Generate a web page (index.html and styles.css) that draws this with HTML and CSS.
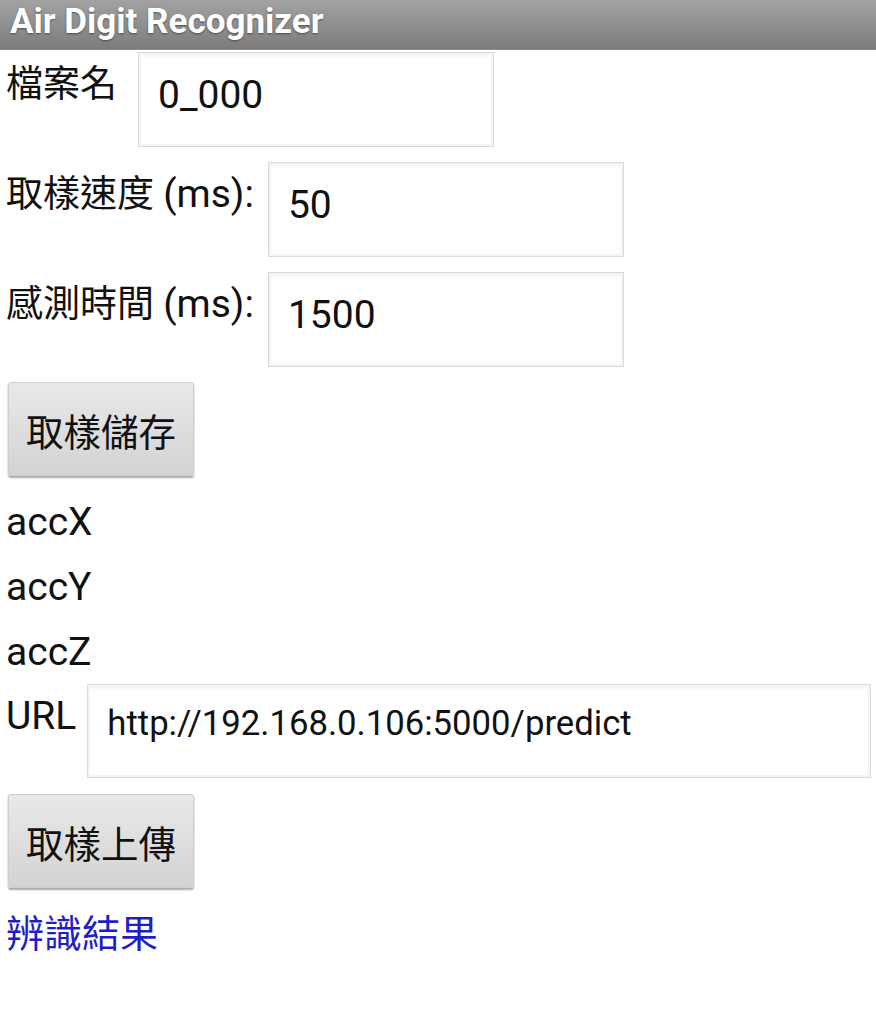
FILE: index.html
```html
<!DOCTYPE html>
<html lang="zh-Hant">
<head>
<meta charset="utf-8">
<title>Air Digit Recognizer</title>
<link rel="stylesheet" href="styles.css">
</head>
<body>
<header class="titlebar">Air Digit Recognizer</header>
<main class="screen">
  <div class="row row-first">
    <span class="label label-file">檔案名</span>
    <div class="field field-short">0_000</div>
  </div>
  <div class="row">
    <span class="label label-ms">取樣速度 <span class="latin">(ms):</span></span>
    <div class="field field-short">50</div>
  </div>
  <div class="row">
    <span class="label label-ms">感測時間 <span class="latin">(ms):</span></span>
    <div class="field field-short">1500</div>
  </div>
  <button class="btn" type="button">取樣儲存</button>
  <div class="acc">
    <div class="label latin">accX</div>
    <div class="label latin">accY</div>
    <div class="label latin">accZ</div>
  </div>
  <div class="row row-url">
    <span class="label latin label-url">URL</span>
    <div class="field field-url">http://192.168.0.106:5000/predict</div>
  </div>
  <button class="btn btn-upload" type="button">取樣上傳</button>
  <div class="label result">辨識結果</div>
</main>
</body>
</html>
```

FILE: styles.css
```css
* { box-sizing: border-box; }

html, body {
  margin: 0;
  padding: 0;
  background: #ffffff;
}

body {
  font-family: Roboto, "Noto Sans CJK TC", sans-serif;
  color: #111111;
  width: 876px;
}

.titlebar {
  height: 50px;
  background: linear-gradient(#a2a2a2, #7c7c7c);
  color: #ffffff;
  font-weight: 700;
  font-size: 35px;
  line-height: 44px;
  padding-left: 10px;
  text-shadow: 0 1px 2px rgba(0, 0, 0, 0.45);
  border-bottom: 1px solid #8a8a8a;
}

.screen {
  padding: 0 5px 0 6px;
}

.row {
  display: flex;
  align-items: flex-start;
  margin-top: 15px;
}

.row-first {
  margin-top: 2px;
}

.label {
  font-size: 37px;
  line-height: 65px;
  white-space: nowrap;
}

.latin {
  font-size: 39px;
}

.label-file { margin-right: 21px; }
.label-ms { margin-right: 14px; }
.label-url { margin-right: 11px; }

.field {
  height: 95px;
  background: #ffffff;
  border: 1px solid #dadada;
  box-shadow: inset 0 0 0 2px #f4f4f4, inset 0 3px 3px rgba(0, 0, 0, 0.06);
  font-size: 39px;
  line-height: 44px;
  padding: 20px 0 0 19px;
  white-space: nowrap;
  overflow: hidden;
}

.field-short {
  width: 356px;
}

.field-url {
  flex: 1;
  height: 94px;
  font-size: 34.7px;
  line-height: 40px;
  padding-top: 18px;
}

.btn {
  display: block;
  width: 186px;
  height: 94px;
  margin: 15px 0 0 2px;
  padding: 0;
  font-family: Roboto, "Noto Sans CJK TC", sans-serif;
  font-size: 37.5px;
  color: #111111;
  background: linear-gradient(#e9e9e9, #d3d3d3);
  border: 1px solid #cdcdcd;
  border-radius: 3px;
  box-shadow: 0 2px 2px rgba(0, 0, 0, 0.35);
}

.btn-upload {
  margin-top: 16px;
}

.acc {
  margin-top: 14px;
}

.row-url {
  margin-top: -1px;
}

.result {
  margin-top: 14px;
  font-size: 38px;
  color: #1e1ec8;
}
```
